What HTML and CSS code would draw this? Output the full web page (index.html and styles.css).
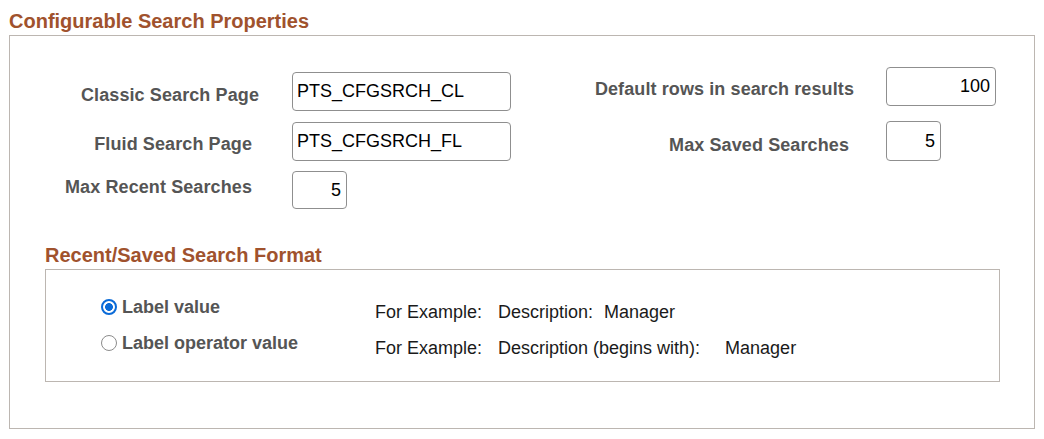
FILE: index.html
```html
<!DOCTYPE html>
<html lang="en">
<head>
<meta charset="utf-8">
<title>Configurable Search Properties</title>
<link rel="stylesheet" href="styles.css">
</head>
<body>
<div class="page">
  <h1 class="title">Configurable Search Properties</h1>
  <div class="box">
    <div class="fields">
      <div class="group group-left">
        <div class="row row-1">
          <label class="lbl lbl-flush">Classic Search Page</label>
          <input class="inp inp-wide" type="text" value="PTS_CFGSRCH_CL">
        </div>
        <div class="row row-2">
          <label class="lbl">Fluid Search Page</label>
          <input class="inp inp-wide" type="text" value="PTS_CFGSRCH_FL">
        </div>
        <div class="row row-3">
          <label class="lbl">Max Recent Searches</label>
          <input class="inp inp-num inp-small inp-short" type="text" value="5">
        </div>
      </div>
      <div class="group group-right">
        <div class="row row-r1">
          <label class="lbl lbl-flush">Default rows in search results</label>
          <input class="inp inp-num inp-mid" type="text" value="100">
        </div>
        <div class="row row-r2">
          <label class="lbl lbl-r2">Max Saved Searches</label>
          <input class="inp inp-num inp-small inp-tall" type="text" value="5">
        </div>
      </div>
    </div>

    <div class="section">
      <h2 class="subtitle">Recent/Saved Search Format</h2>
      <div class="inner">
        <div class="opt">
          <label class="radio-cell"><input type="radio" name="fmt" class="radio" checked><span class="radio-lbl">Label value</span></label>
          <div class="example"><span class="ex-head">For Example:</span><span class="ex-field ex-field-1">Description:</span><span>Manager</span></div>
        </div>
        <div class="opt">
          <label class="radio-cell"><input type="radio" name="fmt" class="radio"><span class="radio-lbl">Label operator value</span></label>
          <div class="example"><span class="ex-head">For Example:</span><span class="ex-field ex-field-2">Description (begins with):</span><span>Manager</span></div>
        </div>
      </div>
    </div>
  </div>
</div>
</body>
</html>
```

FILE: styles.css
```css
* { box-sizing: border-box; }

html, body {
  margin: 0;
  padding: 0;
  background: #ffffff;
}

body {
  font-family: "Liberation Sans", Arial, sans-serif;
  font-size: 18px;
  color: #000;
}

.page {
  padding: 0 9px;
}

.title {
  margin: 9px 0 2px 0;
  font-size: 20px;
  line-height: 24px;
  font-weight: bold;
  color: #a0522d;
}

.box {
  border: 1px solid #bcb6b1;
  padding-bottom: 46px;
}

.fields {
  display: flex;
  align-items: flex-start;
}

.group {
  display: flex;
  flex-direction: column;
}

.group-left {
  padding-top: 36px;
  gap: 11px;
}

.group-right {
  padding-top: 31px;
  margin-left: 63px;
  gap: 15px;
}

.row {
  display: flex;
  align-items: flex-start;
}

.group-left .row { gap: 33px; }
.group-right .row { gap: 32px; }

.row-3 { margin-top: -1px; }

.lbl {
  display: block;
  text-align: right;
  font-weight: bold;
  font-size: 18px;
  line-height: 20px;
  color: #555555;
  padding-right: 7px;
  white-space: nowrap;
  letter-spacing: 0.1px;
}

.group-left .lbl { width: 249px; }
.group-right .lbl { width: 280px; }

.lbl-flush { padding-right: 0; }
.lbl-r2 { padding-right: 5px; }

.row-1 .lbl { padding-top: 13px; }
.row-2 .lbl { padding-top: 12px; }
.row-3 .lbl { padding-top: 6px; }
.row-r1 .lbl { padding-top: 12px; }
.row-r2 .lbl { padding-top: 14px; }

.inp {
  display: block;
  height: 39px;
  border: 1px solid #8f8f8f;
  border-radius: 4px;
  padding: 0 5px 0 4px;
  margin: 0;
  font-family: "Liberation Sans", Arial, sans-serif;
  font-size: 18px;
  color: #000;
  background: #fff;
  outline: none;
}

.inp-wide { width: 219px; }
.inp-mid { width: 110px; }
.inp-small { width: 55px; }
.inp-short { height: 38px; }
.inp-tall { height: 40px; }
.inp-num { text-align: right; }

.section {
  margin: 35px 34px 0 35px;
}

.subtitle {
  margin: 0 0 3px 0;
  font-size: 20px;
  line-height: 22px;
  font-weight: bold;
  color: #a0522d;
}

.inner {
  border: 1px solid #bcb6b1;
  padding: 19px 0 20px 0;
}

.opt {
  display: flex;
  align-items: center;
  height: 36px;
}

.radio-cell {
  display: flex;
  align-items: center;
  width: 329px;
  padding-left: 55px;
  gap: 5px;
}

.radio {
  -webkit-appearance: none;
  appearance: none;
  flex: none;
  width: 16px;
  height: 16px;
  margin: 0;
  border-radius: 50%;
  border: 1.5px solid #8c8c8c;
  background: #fff;
}

.radio:checked {
  border: 2px solid #0b6bd8;
  background: radial-gradient(circle, #0b6bd8 0 3.6px, #ffffff 4.2px);
}

.radio-lbl {
  font-weight: bold;
  font-size: 18px;
  line-height: 20px;
  color: #555555;
}

.example {
  display: flex;
  padding-top: 10px;
  font-size: 18px;
  line-height: 20px;
  color: #1a1a1a;
  white-space: nowrap;
}

.ex-head {
  width: 123px;
}

.ex-field-1 { padding-right: 11px; }
.ex-field-2 { padding-right: 25px; }
```
